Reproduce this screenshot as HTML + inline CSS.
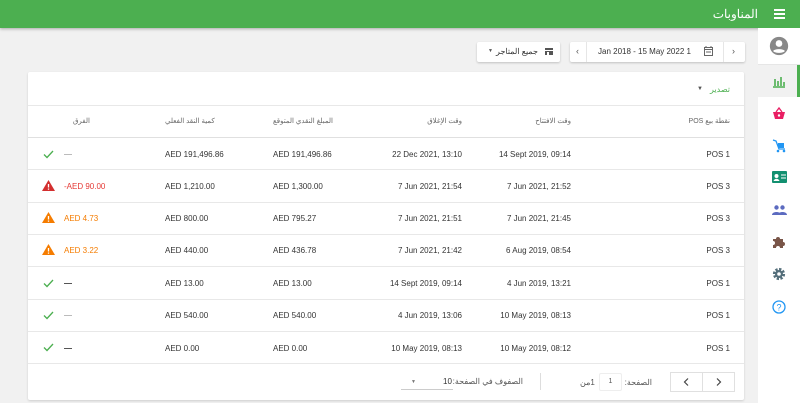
<!DOCTYPE html>
<html><head><meta charset="utf-8">
<style>
*{box-sizing:border-box;margin:0;padding:0}
body{width:800px;height:403px;overflow:hidden;background:#f1f1f1;font-family:"Liberation Sans","Noto Sans CJK SC",sans-serif;position:relative;color:#333}
.a{position:absolute;white-space:nowrap}
.top{left:0;top:0;width:800px;height:28px;background:#4caf50;box-shadow:0 1px 3px rgba(0,0,0,.3)}
.side{left:758px;top:28px;width:42px;height:375px;background:#fff}
.card{left:28px;top:72px;width:716px;height:328px;background:#fff;box-shadow:0 1px 2px rgba(0,0,0,.15);border-radius:2px}
.ln{height:1px;background:#e8e8e8;left:28px;width:716px}
.f{font-size:8px;color:#333}
.h{font-size:7px;color:#666}
.r{text-align:right}
.box{background:#fff;box-shadow:0 1px 2px rgba(0,0,0,.2);border-radius:2px}
</style></head><body>
<div class="a top"></div>
<div class="a" dir="rtl" style="right:42px;top:7px;color:#fff;font-size:12px">المناوبات</div>
<div class="a" style="left:774px;top:9px;width:11px;height:2px;background:#fff;box-shadow:0 4px 0 #fff,0 8px 0 #fff"></div>

<div class="a side"></div>
<div class="a" style="left:758px;top:64px;width:42px;height:1px;background:#e6e6e6"></div>
<div class="a" style="left:758px;top:65px;width:40px;height:32px;background:#f1f1f1"></div>
<div class="a" style="left:797px;top:65px;width:3px;height:32px;background:#4caf50"></div>
<svg class="a" style="left:769px;top:36px" width="20" height="20" viewBox="0 0 24 24"><circle cx="12" cy="12" r="11" fill="#888"/><circle cx="12" cy="9" r="4" fill="#fff"/><path d="M5 18c2-3 12-3 14 0c-2 3-12 3-14 0z" fill="#fff"/></svg>
<svg class="a" style="left:772px;top:74px" width="14" height="14" viewBox="0 0 14 14"><path d="M1 13h12M3 12V5M6 12V7M9 12V3M12 12V8" stroke="#4caf50" stroke-width="1.6"/></svg>
<svg class="a" style="left:772px;top:106px" width="14" height="14" viewBox="0 0 14 14"><path d="M1 6h12l-2 7H3z" fill="#e91e63"/><path d="M4 6l3-4 3 4" stroke="#e91e63" fill="none" stroke-width="1.3"/><circle cx="7" cy="9.5" r="1.2" fill="#fff"/></svg>
<svg class="a" style="left:772px;top:139px" width="14" height="14" viewBox="0 0 14 14"><path d="M1 1l3 1 3 8h6" stroke="#2196f3" fill="none" stroke-width="1.3"/><rect x="6" y="4" width="6" height="5" fill="#2196f3"/><circle cx="6" cy="12" r="1.3" fill="#2196f3"/><circle cx="12" cy="12" r="1.3" fill="#2196f3"/></svg>
<svg class="a" style="left:772px;top:171px" width="15" height="13" viewBox="0 0 15 13"><rect width="15" height="12" fill="#129070" rx="1"/><circle cx="4.5" cy="5" r="2" fill="#fff"/><path d="M1.5 10c1-3 5-3 6 0z" fill="#fff"/><path d="M9 4h5M9 7h5" stroke="#fff"/></svg>
<svg class="a" style="left:772px;top:204px" width="15" height="12" viewBox="0 0 15 12"><circle cx="4.5" cy="3.5" r="2.2" fill="#5c6bc0"/><circle cx="10.5" cy="3.5" r="2.2" fill="#5c6bc0"/><path d="M0 11c0-4 9-4 9 0zM6 11c0-4 9-4 9 0z" fill="#5c6bc0"/></svg>
<svg class="a" style="left:772px;top:235px" width="14" height="14" viewBox="0 0 14 14"><path d="M1 4h3a2 2 0 1 1 4 0h3v3a2 2 0 1 1 0 4v2H8a2 2 0 1 0-4 0H1v-3a2 2 0 1 0 0-4z" fill="#795548"/></svg>
<svg class="a" style="left:772px;top:267px" width="14" height="14" viewBox="0 0 14 14"><circle cx="7" cy="7" r="4.6" fill="none" stroke="#546e7a" stroke-width="3" stroke-dasharray="2.2 1.4"/><circle cx="7" cy="7" r="4" fill="#546e7a"/><circle cx="7" cy="7" r="1.8" fill="#fff"/></svg>
<svg class="a" style="left:772px;top:300px" width="14" height="14" viewBox="0 0 14 14"><circle cx="7" cy="7" r="6" fill="none" stroke="#2196f3" stroke-width="1.3"/><text x="7" y="10.5" font-size="9" text-anchor="middle" fill="#2196f3" font-family="Liberation Sans">?</text></svg>

<!-- date picker -->
<div class="a box" style="left:570px;top:42px;width:175px;height:20px"></div>
<div class="a" style="left:586px;top:42px;width:1px;height:20px;background:#e6e6e6"></div>
<div class="a" style="left:723px;top:42px;width:1px;height:20px;background:#e6e6e6"></div>
<div class="a" style="left:732px;top:46px;font-size:9px;color:#555">›</div>
<div class="a" style="left:576px;top:46px;font-size:9px;color:#555">‹</div>
<svg class="a" style="left:704px;top:46px" width="9" height="10" viewBox="0 0 9 10"><rect x=".5" y="1.5" width="8" height="8" fill="none" stroke="#666"/><path d="M0 3.5h9M2 0v2M7 0v2M2 6h5" stroke="#666"/></svg>
<div class="a f" style="left:598px;top:47px">Jan 2018 - 15 May 2022 1</div>
<!-- store -->
<div class="a box" style="left:477px;top:42px;width:83px;height:20px"></div>
<svg class="a" style="left:545px;top:48px" width="8" height="7" viewBox="0 0 8 7"><rect width="8" height="2" fill="#555"/><rect y="3" width="8" height="4" fill="#555"/><rect x="2" y="4" width="2" height="3" fill="#fff"/></svg>
<div class="a f" dir="rtl" style="right:262px;top:47px">جميع المتاجر</div>
<div class="a" style="left:488px;top:48px;font-size:5px;color:#555">▼</div>

<div class="a card"></div>
<div class="a" dir="rtl" style="right:70px;top:85px;font-size:8px;color:#4caf50">تصدير</div>
<div class="a" style="left:697px;top:86px;font-size:6px;color:#555">▼</div>
<div class="a ln" style="top:105px"></div>

<div class="a h" dir="rtl" style="right:70px;top:117px">نقطة بيع POS</div>
<div class="a h" dir="rtl" style="right:229px;top:117px">وقت الافتتاح</div>
<div class="a h" dir="rtl" style="right:338px;top:117px">وقت الإغلاق</div>
<div class="a h" dir="rtl" style="left:273px;top:117px">المبلغ النقدي المتوقع</div>
<div class="a h" dir="rtl" style="left:165px;top:117px">كمية النقد الفعلي</div>
<div class="a h" dir="rtl" style="left:73px;top:117px">الفرق</div>
<div class="a ln" style="top:137px;background:#e0e0e0"></div>

<div class="a ln" style="top:169px"></div>
<div class="a ln" style="top:202px"></div>
<div class="a ln" style="top:234px"></div>
<div class="a ln" style="top:266px"></div>
<div class="a ln" style="top:299px"></div>
<div class="a ln" style="top:331px"></div>
<div class="a ln" style="top:363px"></div>

<div class="a f r" style="right:70px;top:150px">POS 1</div>
<div class="a f r" style="right:229px;top:150px">14 Sept 2019, 09:14</div>
<div class="a f r" style="right:338px;top:150px">22 Dec 2021, 13:10</div>
<div class="a f" style="left:273px;top:150px">AED 191,496.86</div>
<div class="a f" style="left:165px;top:150px">AED 191,496.86</div>
<div class="a" style="left:64px;top:154px;width:8px;height:1px;background:#bbb"></div>

<div class="a f r" style="right:70px;top:182px">POS 3</div>
<div class="a f r" style="right:229px;top:182px">7 Jun 2021, 21:52</div>
<div class="a f r" style="right:338px;top:182px">7 Jun 2021, 21:54</div>
<div class="a f" style="left:273px;top:182px">AED 1,300.00</div>
<div class="a f" style="left:165px;top:182px">AED 1,210.00</div>
<div class="a f" style="left:64px;top:182px;color:#e53935">-AED 90.00</div>

<div class="a f r" style="right:70px;top:214px">POS 3</div>
<div class="a f r" style="right:229px;top:214px">7 Jun 2021, 21:45</div>
<div class="a f r" style="right:338px;top:214px">7 Jun 2021, 21:51</div>
<div class="a f" style="left:273px;top:214px">AED 795.27</div>
<div class="a f" style="left:165px;top:214px">AED 800.00</div>
<div class="a f" style="left:64px;top:214px;color:#f57c00">AED 4.73</div>

<div class="a f r" style="right:70px;top:246px">POS 3</div>
<div class="a f r" style="right:229px;top:246px">6 Aug 2019, 08:54</div>
<div class="a f r" style="right:338px;top:246px">7 Jun 2021, 21:42</div>
<div class="a f" style="left:273px;top:246px">AED 436.78</div>
<div class="a f" style="left:165px;top:246px">AED 440.00</div>
<div class="a f" style="left:64px;top:246px;color:#f57c00">AED 3.22</div>

<div class="a f r" style="right:70px;top:279px">POS 1</div>
<div class="a f r" style="right:229px;top:279px">4 Jun 2019, 13:21</div>
<div class="a f r" style="right:338px;top:279px">14 Sept 2019, 09:14</div>
<div class="a f" style="left:273px;top:279px">AED 13.00</div>
<div class="a f" style="left:165px;top:279px">AED 13.00</div>
<div class="a" style="left:64px;top:283px;width:8px;height:1px;background:#555"></div>

<div class="a f r" style="right:70px;top:311px">POS 1</div>
<div class="a f r" style="right:229px;top:311px">10 May 2019, 08:13</div>
<div class="a f r" style="right:338px;top:311px">4 Jun 2019, 13:06</div>
<div class="a f" style="left:273px;top:311px">AED 540.00</div>
<div class="a f" style="left:165px;top:311px">AED 540.00</div>
<div class="a" style="left:64px;top:315px;width:8px;height:1px;background:#bbb"></div>

<div class="a f r" style="right:70px;top:344px">POS 1</div>
<div class="a f r" style="right:229px;top:344px">10 May 2019, 08:12</div>
<div class="a f r" style="right:338px;top:344px">10 May 2019, 08:13</div>
<div class="a f" style="left:273px;top:344px">AED 0.00</div>
<div class="a f" style="left:165px;top:344px">AED 0.00</div>
<div class="a" style="left:64px;top:348px;width:8px;height:1px;background:#555"></div>

<svg class="a" style="left:43px;top:150px" width="11" height="9" viewBox="0 0 11 9"><path d="M1 4.5l3 3 6-6.5" stroke="#4caf50" stroke-width="1.3" fill="none"/></svg>
<svg class="a" style="left:43px;top:279px" width="11" height="9" viewBox="0 0 11 9"><path d="M1 4.5l3 3 6-6.5" stroke="#4caf50" stroke-width="1.3" fill="none"/></svg>
<svg class="a" style="left:43px;top:311px" width="11" height="9" viewBox="0 0 11 9"><path d="M1 4.5l3 3 6-6.5" stroke="#4caf50" stroke-width="1.3" fill="none"/></svg>
<svg class="a" style="left:43px;top:343px" width="11" height="9" viewBox="0 0 11 9"><path d="M1 4.5l3 3 6-6.5" stroke="#4caf50" stroke-width="1.3" fill="none"/></svg>
<svg class="a" style="left:42px;top:180px" width="13" height="11" viewBox="0 0 13 11"><path d="M6.5 0L13 11H0z" fill="#d32f2f"/><path d="M6.5 4v3.5M6.5 8.5v1.2" stroke="#fff" stroke-width="1.3"/></svg>
<svg class="a" style="left:42px;top:212px" width="13" height="11" viewBox="0 0 13 11"><path d="M6.5 0L13 11H0z" fill="#f57c00"/><path d="M6.5 4v3.5M6.5 8.5v1.2" stroke="#fff" stroke-width="1.3"/></svg>
<svg class="a" style="left:42px;top:244px" width="13" height="11" viewBox="0 0 13 11"><path d="M6.5 0L13 11H0z" fill="#f57c00"/><path d="M6.5 4v3.5M6.5 8.5v1.2" stroke="#fff" stroke-width="1.3"/></svg>

<!-- footer -->
<div class="a" style="left:670px;top:372px;width:65px;height:20px;border:1px solid #e0e0e0"></div>
<div class="a" style="left:702px;top:372px;width:1px;height:20px;background:#e0e0e0"></div>
<svg class="a" style="left:683px;top:378px" width="6" height="8" viewBox="0 0 6 8"><path d="M5 0.5L1.5 4 5 7.5" stroke="#444" stroke-width="1.2" fill="none"/></svg>
<svg class="a" style="left:716px;top:378px" width="6" height="8" viewBox="0 0 6 8"><path d="M1 0.5L4.5 4 1 7.5" stroke="#444" stroke-width="1.2" fill="none"/></svg>
<div class="a f" dir="rtl" style="right:148px;top:378px;color:#555">الصفحة:</div>
<div class="a" style="left:599px;top:373px;width:23px;height:18px;border:1px solid #eee;border-radius:2px;font-size:7px;text-align:center;line-height:16px;color:#555">1</div>
<div class="a f" dir="rtl" style="left:580px;top:378px;color:#555">1من</div>
<div class="a" style="left:540px;top:373px;width:1px;height:17px;background:#ddd"></div>
<div class="a f" dir="rtl" style="right:277px;top:377px;color:#555">الصفوف في الصفحة:</div>
<div class="a f" style="left:443px;top:377px">10</div>
<div class="a" style="left:401px;top:389px;width:52px;height:1px;background:#ccc"></div>
<div class="a" style="left:411px;top:379px;font-size:5px;color:#777">▼</div>
</body></html>
